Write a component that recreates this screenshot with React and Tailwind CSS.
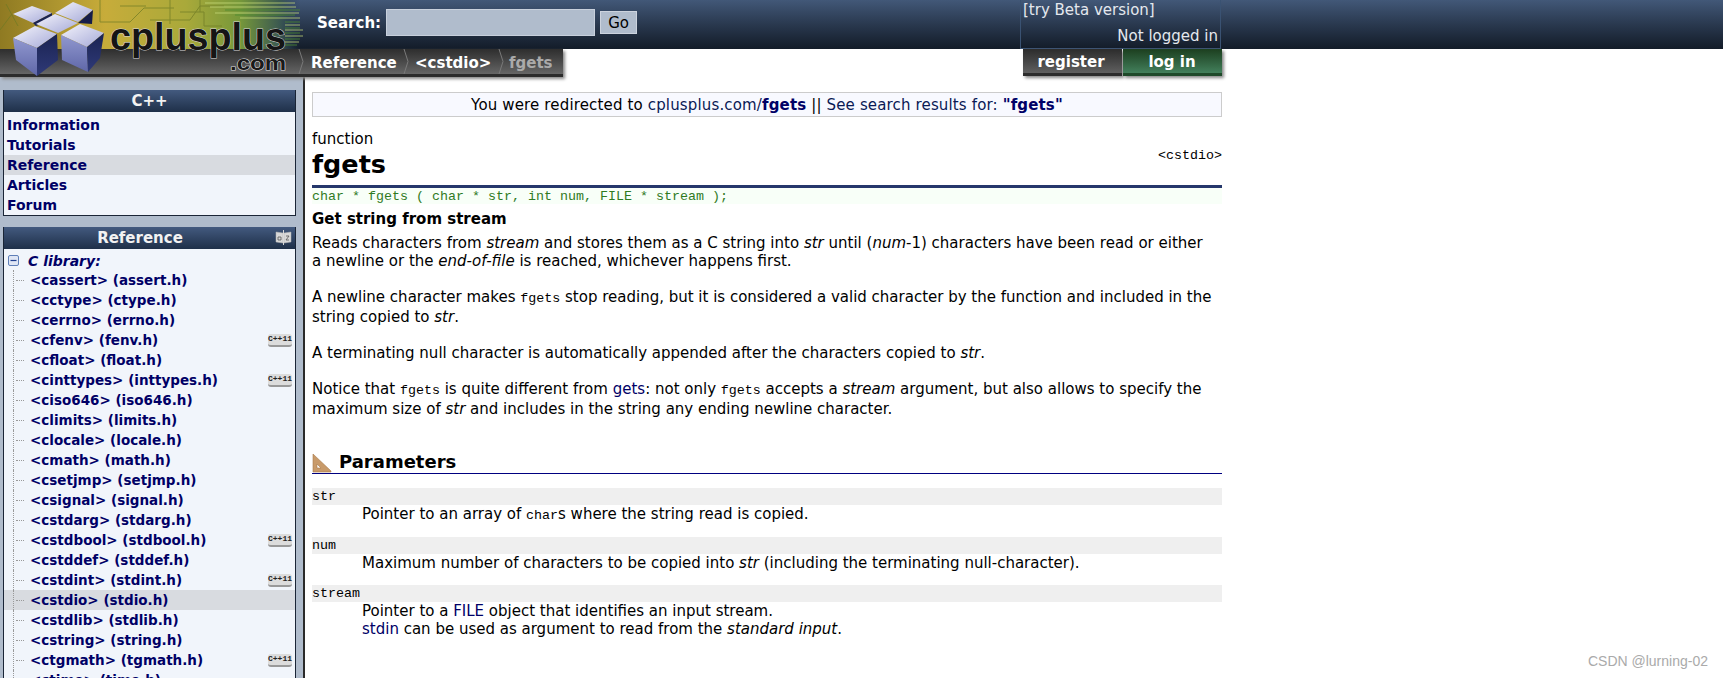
const libs = [
  ['<cassert> (assert.h)'],
  ['<cctype> (ctype.h)'],
  ['<cerrno> (errno.h)'],
  ['<cfenv> (fenv.h)', true],
  ['<cfloat> (float.h)'],
  ['<cinttypes> (inttypes.h)', true],
  ['<ciso646> (iso646.h)'],
  ['<climits> (limits.h)'],
  ['<clocale> (locale.h)'],
  ['<cmath> (math.h)'],
  ['<csetjmp> (setjmp.h)'],
  ['<csignal> (signal.h)'],
  ['<cstdarg> (stdarg.h)'],
  ['<cstdbool> (stdbool.h)', true],
  ['<cstddef> (stddef.h)'],
  ['<cstdint> (stdint.h)', true],
  ['<cstdio> (stdio.h)'],
  ['<cstdlib> (stdlib.h)'],
  ['<cstring> (string.h)'],
  ['<ctgmath> (tgmath.h)', true],
  ['<ctime> (time.h)'],
];

const mono = 'font-["Liberation_Mono",monospace] text-[13.33px]';

function Logo() {
  return (
    <svg className="absolute left-0 top-0" width="305" height="78" viewBox="0 0 305 78">
      <defs>
        <linearGradient id="bg" x1="0" x2="1" y1="0" y2="0">
          <stop offset="0" stopColor="#8f7a22" />
          <stop offset="0.35" stopColor="#c7ac3a" />
          <stop offset="0.62" stopColor="#a9a93a" />
          <stop offset="0.8" stopColor="#76983a" />
          <stop offset="0.93" stopColor="#3c5a50" />
          <stop offset="1" stopColor="#2a3f5c" stopOpacity="0" />
        </linearGradient>
        <linearGradient id="top" x1="0" x2="1" y1="0" y2="1">
          <stop offset="0" stopColor="#f4f4fb" />
          <stop offset="1" stopColor="#a5a9d8" />
        </linearGradient>
        <linearGradient id="side" x1="0" x2="0" y1="0" y2="1">
          <stop offset="0" stopColor="#9198cf" />
          <stop offset="1" stopColor="#5f67a8" />
        </linearGradient>
        <linearGradient id="dark" x1="0" x2="0" y1="0" y2="1">
          <stop offset="0" stopColor="#1a2352" />
          <stop offset="1" stopColor="#2f3a78" />
        </linearGradient>
      </defs>
      <rect x="0" y="0" width="300" height="49" fill="url(#bg)" />
      <g stroke="#6f7a24" strokeWidth="1" fill="none" opacity="0.7">
        <path d="M100 0v22h30l14 -14h30M150 20h40l10 -14h24M170 0v24M120 6h26M6 4l12 22M0 30l12 -16" />
        <path d="M180 12h24v14h18M200 0v12" />
      </g>
      <g stroke="#c9dc7a" strokeWidth="1" opacity="0.75">
        <path d="M205 3h90M210 7h86M215 13h84M240 18h60M285 25h15M285 30h18M285 36h18M285 42h14" />
      </g>
      <g stroke="#4d8a30" strokeWidth="1" opacity="0.8">
        <path d="M225 10h75M235 15h60M285 22h15M285 28h15M285 33h15M285 39h15M285 45h12" />
      </g>
      <polygon points="13,14 32,6 52,13 33,23" fill="url(#top)" />
      <polygon points="33,23 52,13 52,20 36,26" fill="#1a2352" />
      <polygon points="55,13 73,2 93,10 78,22" fill="url(#top)" />
      <polygon points="93,10 92,24 78,23" fill="#161d4a" />
      <polygon points="36,24 55,14 78,23 58,33" fill="url(#top)" />
      <polygon points="13,38 35,26 57,34 37,48" fill="url(#top)" />
      <polygon points="13,38 37,48 37,76 16,60" fill="url(#side)" />
      <polygon points="37,48 57,34 58,60 37,76" fill="url(#dark)" />
      <polygon points="61,35 80,24 104,33 87,47" fill="url(#top)" />
      <polygon points="61,35 87,47 88,72 62,60" fill="url(#side)" />
      <polygon points="87,47 104,33 100,58 88,72" fill="url(#dark)" />
      <text x="110" y="50" fontFamily="Liberation Sans, sans-serif" fontWeight="700" fontSize="38" textLength="176" lengthAdjust="spacingAndGlyphs" fill="#151515" stroke="#d8d8d8" strokeWidth="1" paintOrder="stroke">cplusplus</text>
      <text x="230" y="70" fontFamily="Liberation Sans, sans-serif" fontWeight="700" fontSize="20" textLength="56" lengthAdjust="spacingAndGlyphs" fill="#1a1a1a" stroke="#e0e0e0" strokeWidth="1" paintOrder="stroke">.com</text>
    </svg>
  );
}

function Crumb({ children, className }) {
  return (
    <div className={`flex h-full items-center ${className}`}>
      <svg width="7" height="25" viewBox="0 0 7 25" className="shrink-0">
        <path d="M1 0l4 12.5l-4 12.5" fill="none" stroke="#7a7a7a" strokeWidth="1" />
      </svg>
      {children}
    </div>
  );
}

function Badge() {
  return (
    <span className='ml-auto mr-[2px] flex h-[13px] w-[24px] items-center justify-center rounded-[3px] border-b-2 border-[#999] bg-[#dcdcdc] font-["Liberation_Mono",monospace] text-[8px] font-bold text-[#222]'>
      C++11
    </span>
  );
}

function PanelTitle({ children, icon, className = '' }) {
  return (
    <div className={`relative flex h-[22px] items-center justify-center bg-gradient-to-b from-[#435a7f] to-[#1f3049] text-[15px] font-bold text-[#f2f2f2] ${className}`}>
      {children}
      {icon}
    </div>
  );
}

function Param({ name, children, className = '' }) {
  return (
    <div className={`mb-[12px] ${className}`}>
      <div className={`h-[17px] bg-[#efefef] leading-[17px] ${mono}`}>{name}</div>
      <div className="pl-[50px]">{children}</div>
    </div>
  );
}

export default function App() {
  return (
    <div className='relative h-[678px] w-full overflow-hidden bg-white font-["DejaVu_Sans",Verdana,sans-serif] text-[15px] leading-[18px] text-black'>
      <header className="relative h-[77px]">
        <div className="h-[49px] bg-gradient-to-b from-[#425878] to-[#131c29]">
          <div className="flex h-full w-[1221px] items-start pl-[317px]">
            <span className="mt-[14px] text-[15px] font-bold text-white">Search:</span>
            <input className="ml-[5px] mt-[9px] h-[27px] w-[209px] border border-[#c8d0dc] bg-[#b0bccc]" />
            <button className="ml-[5px] mt-[11px] h-[23px] w-[37px] border border-[#ccd3de] bg-[#b0bccc] text-[15px] text-black">Go</button>
            <div className="ml-auto flex h-[49px] w-[201px] flex-col justify-between border-x border-b border-[#3a5272] px-[2px] pt-[1px] text-[15px] leading-[18px] text-[#e4e8ee]">
              <span>[try Beta version]</span>
              <span className="mb-[3px] text-right">Not logged in</span>
            </div>
          </div>
        </div>
        <div className="flex h-[28px] w-[1222px] items-start">
          <div className="flex h-[28px] w-[563px] border-b-[3px] border-[#2c2c2c] bg-gradient-to-b from-[#2e2e2e] to-[#666] pl-[298px] text-[15px] font-bold shadow-[2px_2px_3px_#888]">
            <Crumb className="w-[105px] text-white"><span className="ml-[6px] pt-[2px]">Reference</span></Crumb>
            <Crumb className="w-[95px] text-white"><span className="ml-[5px] pt-[2px]">&lt;cstdio&gt;</span></Crumb>
            <Crumb className="text-[#aaaaaa]"><span className="ml-[4px] pt-[2px]">fgets</span></Crumb>
          </div>
          <div className="ml-auto flex h-[28px] w-[199px] text-[15px] font-bold text-white">
            <div className="flex h-[27px] w-[99px] items-center justify-center border-b-[3px] border-[#2c2c2c] bg-gradient-to-b from-[#2c2c2c] to-[#606060] pr-[3px] pt-[2px] shadow-[2px_2px_3px_#888]">register</div>
            <div className="ml-px flex h-[27px] w-[99px] items-center justify-center border-b-[3px] border-[#1f4a2a] bg-gradient-to-b from-[#1c3f1f] to-[#43805c] pr-[1px] pt-[2px] shadow-[2px_2px_3px_#888]">log in</div>
          </div>
        </div>
        <Logo />
      </header>

      <div className="flex h-[601px]">
        <aside className="h-full w-[305px] shrink-0 border-r-[2px] border-[#2a2a2a] bg-[#b0bccc] pl-[3px] pr-[7px] pt-[13px] text-[14px] font-bold leading-[20px] text-[#000066]">
          <div className="border border-t-0 border-[#1a2536] bg-[#f1f5fb]">
            <PanelTitle>C++</PanelTitle>
            <div className="pt-[3px]">
              <div className="h-5 pl-[3px]">Information</div>
              <div className="h-5 pl-[3px]">Tutorials</div>
              <div className="h-5 bg-[#d8dbe0] pl-[3px]">Reference</div>
              <div className="h-5 pl-[3px]">Articles</div>
              <div className="h-5 pl-[3px]">Forum</div>
            </div>
          </div>

          <div className="mt-[11px] border border-t-0 border-[#1a2536] bg-[#f1f5fb]">
            <PanelTitle
              className="pr-[19px]"
              icon={
                <svg className="absolute right-[3px] top-[2px]" width="17" height="17" viewBox="0 0 17 17">
                  <path d="M1 3l7 1v10l-7 -1zM16 3l-7 1v10l7 -1z" fill="#d8d8d8" stroke="#b5b5b5" strokeWidth="0.5" />
                  <path d="M8.5 1v15" stroke="#d8d8d8" />
                  <path d="M3 8h3v3h-3zM11 7h3l-3 4h3" fill="none" stroke="#555" strokeWidth="0.8" />
                </svg>
              }
            >
              Reference
            </PanelTitle>
            <div className="flex h-[21px] items-center pt-[2px]">
              <svg className="ml-[4px] shrink-0" width="11" height="11" viewBox="0 0 11 11">
                <rect x="0.5" y="0.5" width="10" height="10" rx="1.5" fill="#dfe6f5" stroke="#5f7fb8" />
                <path d="M2.5 5.5h6" stroke="#1f3f8f" strokeWidth="1.2" />
              </svg>
              <i className="ml-[9px]">C library:</i>
            </div>
            {libs.map(([label, isNew]) => (
              <div key={label} className={`flex h-5 items-center pr-px text-[13.5px] ${label.startsWith('<cstdio>') ? 'bg-[#d8dbe0]' : ''}`}>
                <div className="ml-[9px] flex h-full w-[17px] shrink-0 items-center border-l border-dotted border-[#999]">
                  <div className="ml-[2px] w-[8px] border-t border-dotted border-[#999]" />
                </div>
                <span className="whitespace-nowrap">{label}</span>
                {isNew && <Badge />}
              </div>
            ))}
          </div>
        </aside>

        <main className="w-[917px] pl-[7px] pt-[15px]">
          <div className="h-[25px] border border-[#cccccc] bg-[#f8f9ff] pt-[1px] text-center leading-[22px] tracking-[0.15px]">
            You were redirected to <span className="text-[#0a1a55]">cplusplus.com/</span><b className="text-[#000066]">fgets</b> || <span className="text-[#0a1a55]">See search results for:</span> <b className="text-[#000066]">"fgets"</b>
          </div>

          <div className="mt-[12px] flex h-[59px] items-start border-b-[3px] border-[#25376b]">
            <div>
              <div className="h-[18px] pt-[1px] leading-[18px]">function</div>
              <h1 className="mt-[1px] text-[25.5px] font-bold leading-[32px]">fgets</h1>
            </div>
            <span className={`ml-auto mt-[18px] ${mono}`}>&lt;cstdio&gt;</span>
          </div>

          <div className={`h-[16px] bg-[#f8fff8] leading-[17px] text-[#2f7a1f] ${mono}`}>char * fgets ( char * str, int num, FILE * stream );</div>

          <div className="mt-[6px] font-bold leading-[18px]">Get string from stream</div>

          <div className="mt-[6px] leading-[18px]">
            <p>
              Reads characters from <i>stream</i> and stores them as a C string into <i>str</i> until (<i>num</i>-1) characters have been read or either
              <br />
              a newline or the <i>end-of-file</i> is reached, whichever happens first.
            </p>
            <p className="mt-[18px]">
              A newline character makes <span className={mono}>fgets</span> stop reading, but it is considered a valid character by the function and included in the
              string copied to <i>str</i>.
            </p>
            <p className="mt-[18px]">A terminating null character is automatically appended after the characters copied to <i>str</i>.</p>
            <p className="mt-[18px]">
              Notice that <span className={mono}>fgets</span> is quite different from <span className="text-[#000066]">gets</span>: not only <span className={mono}>fgets</span> accepts a <i>stream</i> argument, but also allows to specify the
              maximum size of <i>str</i> and includes in the string any ending newline character.
            </p>
          </div>

          <div className="mt-[32px] flex h-[24px] items-end border-b border-[#000080]">
            <svg width="20" height="20" viewBox="0 0 20 20" className="shrink-0">
              <path fillRule="evenodd" d="M1 1l18 17v1h-18zM5 11v4h4z" fill="#c89a6a" stroke="#a87a4a" strokeWidth="0.6" />
            </svg>
            <h2 className="ml-[7px] text-[18px] font-bold leading-[22px]">Parameters</h2>
          </div>

          <div className="mt-[14px] leading-[18px]">
            <Param name="str">
              Pointer to an array of <span className={mono}>char</span>s where the string read is copied.
            </Param>
            <Param name="num">
              Maximum number of characters to be copied into <i>str</i> (including the terminating null-character).
            </Param>
            <Param name="stream" className="mt-[13px]">
              Pointer to a <span className="text-[#000066]">FILE</span> object that identifies an input stream.
              <br />
              <span className="text-[#000066]">stdin</span> can be used as argument to read from the <i>standard input</i>.
            </Param>
          </div>
        </main>
      </div>

      <div className='absolute bottom-[9px] right-[15px] font-["Liberation_Sans",sans-serif] text-[14px] leading-[16px] text-[#aaaaaa]'>CSDN @lurning-02</div>
    </div>
  );
}
